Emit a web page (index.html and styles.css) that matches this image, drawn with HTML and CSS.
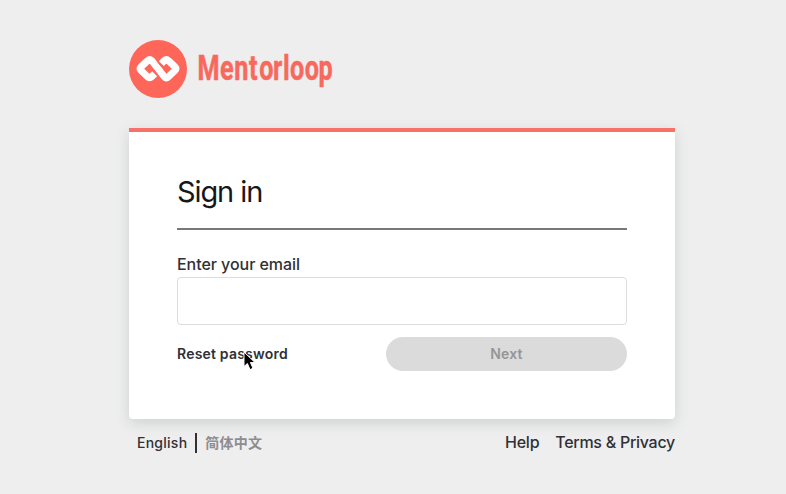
FILE: index.html
```html
<!DOCTYPE html>
<html lang="en">
<head>
<meta charset="utf-8">
<title>Sign in</title>
<link rel="stylesheet" href="styles.css">
</head>
<body>
<div class="page">
  <header class="brand">
    <svg class="mark" viewBox="0 0 58 58">
      <circle cx="29" cy="29" r="29"/>
      <g class="loop">
        <path d="M25.6 33.8 22.6 36.8Q20.6 38.8 18.6 36.8L12 30.5Q10.4 28.7 12 26.9L18.6 20.6Q20.6 18.6 22.8 20.6L35.4 36.8Q37.4 38.8 39.4 36.8L46 30.5Q47.6 28.7 46 26.9L39.4 20.6Q37.4 18.6 35.2 20.6L32.4 23.6"/>
        <path class="gap" d="M28 21 32.2 26.4M25.8 31.2 30 36.6"/>
      </g>
    </svg>
    <svg class="wordmark" viewBox="0 0 136 44"><g transform="scale(.7 1)"><text y="32" x="-.7 31.3 51.8 72.8 87.5 107.3 121.6 131.3 152.5 172.2">Mentorloop</text></g></svg>
  </header>
  <main class="card">
    <h1>Sign in</h1>
    <label for="email">Enter your email</label>
    <input id="email" type="email">
    <div class="actions">
      <a class="reset">Reset password
        <svg class="cursor" viewBox="0 0 14 20"><path d="M1 1V15.5L4.4 12.5 7 18.6 10 17.3 7.4 11.5H12Z"/></svg>
      </a>
      <button disabled>Next</button>
    </div>
  </main>
  <footer>
    <div class="languages"><span class="current">English</span><span class="other">简体中文</span></div>
    <nav><a class="help">Help</a><a class="terms">Terms &amp; Privacy</a></nav>
  </footer>
</div>
</body>
</html>
```
FILE: styles.css
```css
* { box-sizing: border-box; }
body {
  margin: 0;
  height: 494px;
  overflow: hidden;
  background: #eee;
  color: #303036;
  font-family: Inter, "Noto Sans CJK SC", sans-serif;
}
.page { width: 546px; margin-left: 129px; padding-top: 40px; }
.brand { display: flex; height: 88px; }
.mark { width: 58px; height: 58px; margin-top: -.5px; fill: #ff665a; }
.loop { fill: none; stroke: #fff; stroke-width: 7; stroke-linejoin: round; }
.gap { stroke: #ff665a; stroke-width: 1; }
.wordmark { width: 136px; height: 44px; margin: 8px 0 0 11px; overflow: visible; }
.wordmark text { font: bold 36px Roboto, sans-serif; fill: #f8695d; stroke: #f8695d; stroke-width: .5; }
.card {
  height: 291px;
  padding: 42px 48px 0;
  background: #fff;
  border-top: 4px solid #f87168;
  border-radius: 0 0 4px 4px;
  box-shadow: 0 4px 14px rgba(80, 100, 95, .2);
}
h1 {
  height: 56px;
  margin: 0 0 24px;
  border-bottom: 2px solid #77777c;
  font-size: 29px;
  font-weight: 400;
  line-height: 36px;
  letter-spacing: -1.1px;
  color: #17171a;
}
label { display: block; height: 20px; font-size: 16px; font-weight: 500; line-height: 20px; letter-spacing: -.05px; }
input {
  display: block;
  width: 450px;
  height: 48px;
  margin: 3px 0 12px;
  border: 1px solid #ddd;
  border-radius: 4px;
  background: #fff;
}
.actions { display: flex; justify-content: space-between; height: 34px; }
.reset { position: relative; font-size: 14px; font-weight: 600; line-height: 34px; letter-spacing: .2px; }
.cursor { position: absolute; left: 66px; top: 14px; width: 14px; height: 20px; fill: #000; stroke: #fff; stroke-width: 1; }
button {
  width: 241px;
  height: 34px;
  padding: 0 0 1px;
  border: 0;
  border-radius: 17px;
  background: #dbdbdb;
  color: #959597;
  font: 600 14px/32px Inter, sans-serif;
  letter-spacing: .2px;
}
footer { display: flex; justify-content: space-between; padding: 13px 0 0 8px; line-height: 20px; }
.languages { display: flex; align-items: center; height: 21px; font-size: 14px; font-weight: 500; letter-spacing: .25px; }
.current { padding-right: 8px; border-right: 2px solid #303036; }
.other { padding-left: 8px; color: #8d8d90; font-weight: 700; }
nav { display: flex; gap: 16px; font-size: 16px; font-weight: 500; letter-spacing: -.27px; }
```
